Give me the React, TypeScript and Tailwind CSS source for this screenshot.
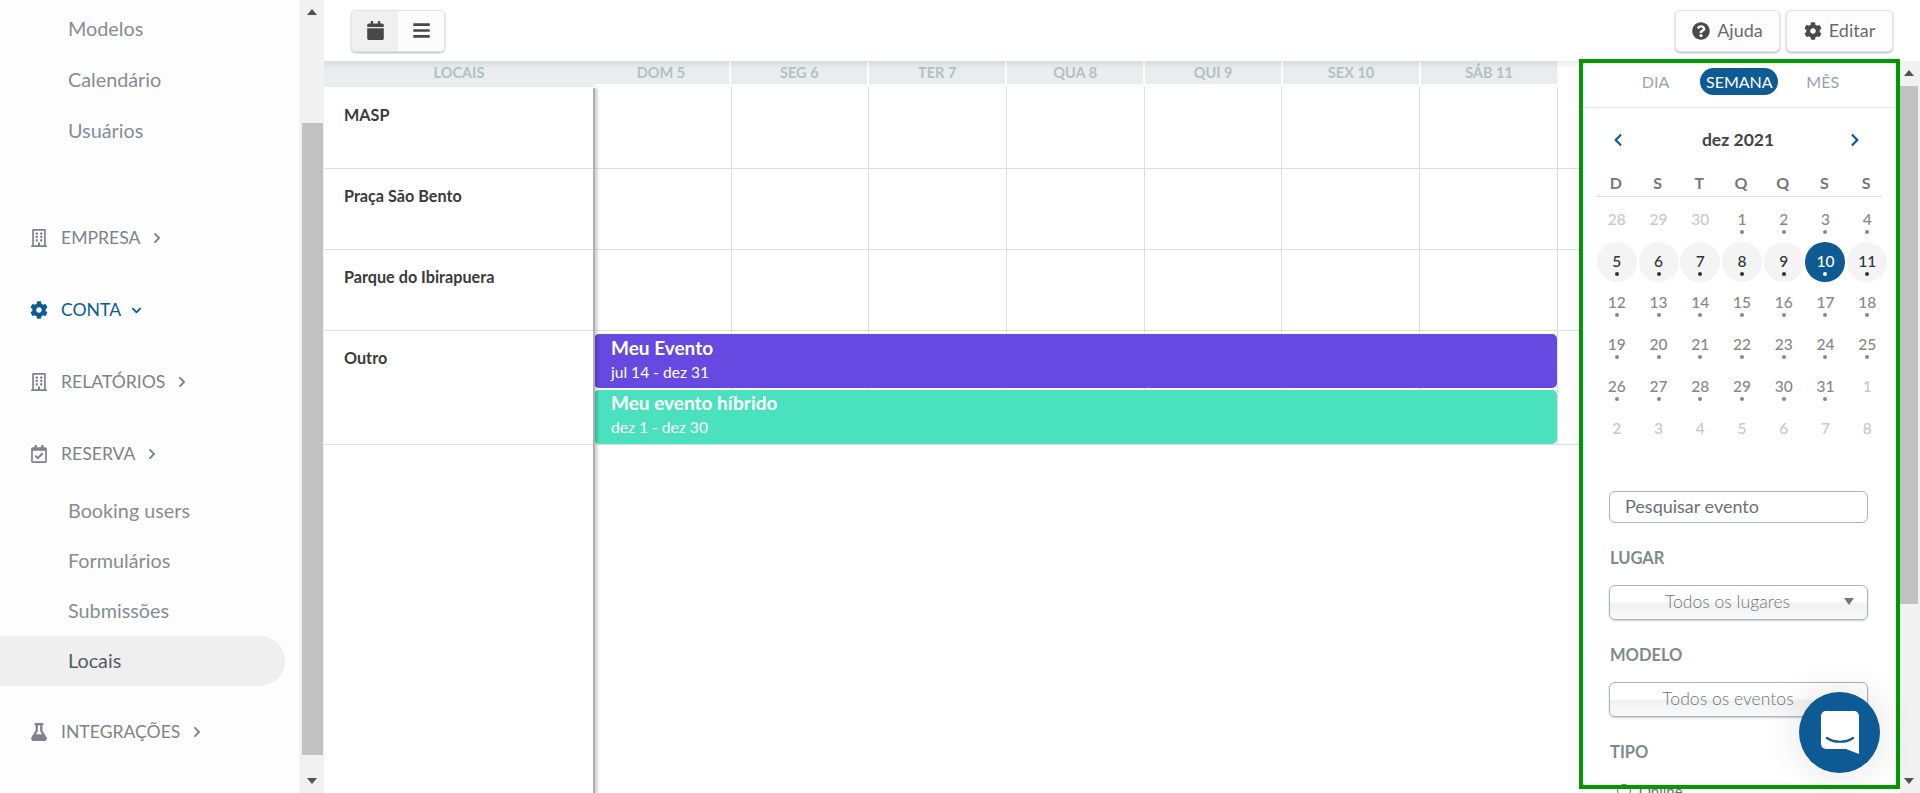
import React from "react";
import { FaRegBuilding, FaCog, FaRegCalendarCheck, FaFlask, FaCalendar, FaBars, FaQuestionCircle, FaChevronLeft, FaChevronRight, FaChevronDown } from "react-icons/fa";

const font = { fontFamily: "Lato, 'Noto Sans', sans-serif" };

function SubItem({ label, active }: { label: string; active?: boolean }) {
  return (
    <div className={"h-[50px] flex items-center pl-[68px] text-[19.8px] w-[285px] rounded-r-[25px] " + (active ? "bg-[#efefef] text-[#555a61]" : "text-[#858d94]")}>
      {label}
    </div>
  );
}

function Heading({ label, icon, active, className }: { label: string; icon: React.ReactNode; active?: boolean; className?: string }) {
  const color = active ? "text-[#0d5a94]" : "text-[#7d8389]";
  return (
    <div className={"h-[60px] flex items-center pl-[30px] text-[17.6px] " + color + " " + (className ?? "")}>
      <span className="w-[18px] flex justify-center text-[18px]">{icon}</span>
      <span className="ml-[13px]">{label}</span>
      {active ? <FaChevronDown className="ml-[10px] text-[11px]" /> : <FaChevronRight className="ml-[11px] text-[12px]" />}
    </div>
  );
}

function Scrollbar({ className, thumbClass }: { className?: string; thumbClass: string }) {
  return (
    <div className={"flex flex-col items-center bg-[#f1f1f1] " + (className ?? "")}>
      <div className="h-[24px] w-full flex items-center justify-center shrink-0">
        <div className="w-0 h-0 border-x-[5px] border-x-transparent border-b-[6px] border-b-[#505050]" />
      </div>
      <div className={"bg-[#c1c1c1] " + thumbClass} />
      <div className="flex-1" />
      <div className="h-[24px] w-full flex items-center justify-center shrink-0">
        <div className="w-0 h-0 border-x-[5px] border-x-transparent border-t-[6px] border-t-[#505050]" />
      </div>
    </div>
  );
}

function Sidebar() {
  return (
    <div className="w-[324px] h-full flex shrink-0 bg-[#fdfdfd] overflow-hidden">
      <div className="w-[299px] pt-[3px]">
        <div className="h-[51px] flex items-center pl-[68px] text-[19.8px] text-[#858d94]">Modelos</div>
        <div className="h-[51px] flex items-center pl-[68px] text-[19.8px] text-[#858d94]">Calendário</div>
        <div className="h-[51px] flex items-center pl-[68px] text-[19.8px] text-[#858d94]">Usuários</div>
        <Heading className="mt-[52px]" label="EMPRESA" icon={<FaRegBuilding />} />
        <Heading className="mt-[12px]" label="CONTA" active icon={<FaCog />} />
        <Heading className="mt-[12px]" label="RELATÓRIOS" icon={<FaRegBuilding />} />
        <Heading className="mt-[12px]" label="RESERVA" icon={<FaRegCalendarCheck />} />
        <div className="mt-[2px]">
          <SubItem label="Booking users" />
          <SubItem label="Formulários" />
          <SubItem label="Submissões" />
          <SubItem label="Locais" active />
        </div>
        <Heading className="mt-[16px]" label="INTEGRAÇÕES" icon={<FaFlask />} />
      </div>
      <Scrollbar className="w-[25px] h-full px-[2px] pr-[2px] border-l border-l-[#f4f4f4]" thumbClass="w-[21px] h-[632px] mt-[99px]" />
    </div>
  );
}

function ToolButton({ icon, label, className }: { icon: React.ReactNode; label: string; className: string }) {
  return (
    <div className={"h-[42px] flex items-center justify-center gap-[7px] rounded-[5px] border border-[#e3e3e3] bg-[#fdfdfd] shadow-[0_1px_2px_rgba(0,0,0,0.3)] text-[18px] text-[#6a6a6a] " + className}>
      <span className="text-[#4a4a4a] text-[18px]">{icon}</span>
      {label}
    </div>
  );
}

function Toolbar() {
  return (
    <div className="h-[61px] shrink-0 flex items-center pl-[27px] pr-[27px] justify-between bg-white">
      <div className="h-[42px] w-[94px] flex rounded-[5px] border border-[#e3e3e3] shadow-[0_1px_2px_rgba(0,0,0,0.3)] overflow-hidden text-[#484848]">
        <div className="w-[47px] flex items-center justify-center bg-[#f0f0f0]"><FaCalendar className="text-[19px]" /></div>
        <div className="w-[47px] flex items-center justify-center bg-[#fcfcfc]"><FaBars className="text-[19px]" /></div>
      </div>
      <div className="flex gap-[6px]">
        <ToolButton className="w-[105px]" icon={<FaQuestionCircle />} label="Ajuda" />
        <ToolButton className="w-[107px]" icon={<FaCog />} label="Editar" />
      </div>
    </div>
  );
}

const days = ["DOM 5", "SEG 6", "TER 7", "QUA 8", "QUI 9", "SEX 10", "SÁB 11"];

function GridRow({ label, height, labelClass, children }: { label: string; height: string; labelClass: string; children?: React.ReactNode }) {
  return (
    <div className={"flex border-b border-b-[#dfdfdf] " + height}>
      <div className={"w-[270px] shrink-0 pl-[20px] text-[16.2px] font-bold text-[#3a3a3a] " + labelClass}>{label}</div>
      <div className="relative flex w-[965px]">
        {days.map((d) => (
          <div key={d} className="w-[137.7px] shrink-0 border-r border-r-[#dedede]" />
        ))}
        {children}
      </div>
    </div>
  );
}

function EventBar({ title, sub, color, className }: { title: string; sub: string; color: string; className: string }) {
  return (
    <div className={"absolute left-0 w-[963px] h-[54px] rounded-[5px] pl-[17px] text-white " + color + " " + className}>
      <div className="text-[19px] font-bold leading-[26px]">{title}</div>
      <div className="text-[15.6px] leading-[23px]">{sub}</div>
    </div>
  );
}

function CalendarArea() {
  return (
    <div className="flex-1 relative overflow-hidden bg-white">
      <div className="flex h-[26px] w-[1235px] text-[14.5px] font-bold text-[#b3c0c4]">
        <div className="w-[270px] h-[26px] bg-[#e9eded] flex items-center justify-center pb-[2px]">LOCAIS</div>
        {days.map((d, i) => (
          <div key={d} className={"h-[23px] bg-[#e9eded] flex items-center justify-center border-r-2 border-r-white " + (i === 0 ? "w-[137.5px] pr-[1.5px]" : "w-[138px]")}>{d}</div>
        ))}
      </div>
      <div className="relative">
        <GridRow label="MASP" height="h-[82px]" labelClass="pt-[16px]" />
        <GridRow label="Praça São Bento" height="h-[81px]" labelClass="pt-[15px]" />
        <GridRow label="Parque do Ibirapuera" height="h-[81px]" labelClass="pt-[15px]" />
        <GridRow label="Outro" height="h-[114px]" labelClass="pt-[15px]">
          <EventBar className="top-[3px] pt-[1px]" color="bg-[#6549e0]" title="Meu Evento" sub="jul 14 - dez 31" />
          <EventBar className="top-[59px]" color="bg-[#4ae1be]" title="Meu evento híbrido" sub="dez 1 - dez 30" />
        </GridRow>
        <div className="absolute top-[1px] left-[269px] w-[2px] h-[706px] bg-[#b0b0b0] shadow-[2px_0_3px_rgba(0,0,0,0.3)]" />
      </div>
      <div className="absolute inset-x-0 top-0 h-[8px] bg-[linear-gradient(to_bottom,rgba(0,0,0,0.07),rgba(0,0,0,0))]" />
    </div>
  );
}

const weeks = [
  [28, 29, 30, 1, 2, 3, 4],
  [5, 6, 7, 8, 9, 10, 11],
  [12, 13, 14, 15, 16, 17, 18],
  [19, 20, 21, 22, 23, 24, 25],
  [26, 27, 28, 29, 30, 31, 1],
  [2, 3, 4, 5, 6, 7, 8],
];

function DayCell({ n, r, c }: { n: number; r: number; c: number }) {
  const muted = (r === 0 && c < 3) || r === 5 || (r === 4 && c === 6);
  const inWeek = r === 1;
  const selected = inWeek && c === 5;
  let text = "text-[#8c8686]";
  if (muted) text = "text-[#c8c8c8]";
  if (inWeek) text = "text-[#333333]";
  if (selected) text = "text-white font-bold";
  let bg = "";
  if (inWeek) bg = "bg-[#f4f4f4]";
  if (selected) bg = "bg-[#0d5a94]";
  const dot = selected ? "bg-white" : inWeek ? "bg-[#333333]" : "bg-[#8c8686]";
  return (
    <div className="h-[41.8px] flex justify-center items-center">
      <div className={"w-[40px] h-[40px] rounded-full flex flex-col items-center pt-[9px] text-[15.5px] font-medium leading-[20px] " + bg + " " + text}>
        {n}
        {!muted && <div className={"w-[4px] h-[4px] rounded-full mt-[1px] " + dot} />}
      </div>
    </div>
  );
}

function SelectBox({ label, arrow }: { label: string; arrow?: boolean }) {
  return (
    <div className="relative h-[35px] rounded-[6px] border border-[#aab4ba] bg-[linear-gradient(to_bottom,#ffffff_0%,#ffffff_45%,#f1f1f1_55%,#fafafa_100%)] shadow-[0_1px_2px_rgba(0,0,0,0.2)] flex items-center justify-center text-[17.6px] font-light text-[#6f7479]">
      <span className={arrow ? "mr-[22px]" : "mr-[21px]"}>{label}</span>
      {arrow && <div className="absolute right-[13px] top-[12px] w-0 h-0 border-x-[5px] border-x-transparent border-t-[7px] border-t-[#777777]" />}
    </div>
  );
}

function RightPanel() {
  return (
    <div className="w-[321px] shrink-0 bg-white overflow-hidden relative">
      <div className="absolute inset-x-0 top-0 h-[5px] bg-[linear-gradient(to_bottom,#ececec,#ffffff)]" />
      <div className="ml-[4px] w-[313px] h-[47px] flex justify-center border-b border-b-[#e6e6e6] text-[16px] text-[#9aa3aa] relative">
        <div className="flex items-center pt-[1px] h-[40px] pl-[2px]">
          <span>DIA</span>
          <span className="ml-[31px] w-[78px] h-[27px] rounded-full bg-[#0d5a94] text-white flex items-center justify-center">SEMANA</span>
          <span className="ml-[28px]">MÊS</span>
        </div>
      </div>
      <div className="flex items-center justify-between ml-[32px] w-[251px] h-[28px] mt-[18px] text-[#0d5a94]">
        <FaChevronLeft className="text-[14px]" />
        <span className="text-[17.5px] font-bold text-[#444444] pl-[3px]">dez 2021</span>
        <FaChevronRight className="text-[14px]" />
      </div>
      <div className="ml-[17px] w-[286px] mt-[19px] border-b border-b-[#dddddd] h-[24px]">
        <div className="-ml-[1px] w-[292px] grid grid-cols-7 text-[16px] font-bold text-[#777777] leading-[20px]">
          {["D", "S", "T", "Q", "Q", "S", "S"].map((d, i) => (
            <div key={i} className="text-center">{d}</div>
          ))}
        </div>
      </div>
      <div className="ml-[17px] w-[292px] mt-[2px] grid grid-cols-7">
        {weeks.map((w, r) => w.map((n, c) => <DayCell key={r + "-" + c} n={n} r={r} c={c} />))}
      </div>
      <div className="ml-[30px] w-[259px] mt-[41px]">
        <div className="h-[32px] rounded-[6px] border border-[#aab4ba] flex items-center pl-[15px] text-[18px] text-[#6c7076]">Pesquisar evento</div>
        <div className="mt-[25px] h-[20px] pl-[1px] text-[16.5px] font-bold text-[#7f8a8e] leading-[20px]">LUGAR</div>
        <div className="mt-[17px]"><SelectBox label="Todos os lugares" arrow /></div>
        <div className="mt-[25px] h-[20px] pl-[1px] text-[16.5px] font-bold text-[#7f8a8e] leading-[20px]">MODELO</div>
        <div className="mt-[17px]"><SelectBox label="Todos os eventos" /></div>
        <div className="mt-[25px] h-[20px] pl-[1px] text-[16.5px] font-bold text-[#7f8a8e] leading-[20px]">TIPO</div>
        <div className="mt-[18px] ml-[8px] flex items-center gap-[8px] text-[15px] text-[#6c7076]">
          <span className="w-[14px] h-[14px] rounded-full border border-[#666666]" />
          Online
        </div>
      </div>
    </div>
  );
}

function ChatBubble() {
  return (
    <div className="absolute left-[1799px] top-[692px] w-[81px] h-[81px] rounded-full bg-[#0d5a94] flex items-center justify-center shadow-[0_0_40px_rgba(0,0,0,0.12)]">
      <svg width="38" height="44" viewBox="0 0 38 44">
        <path d="M5 0H33A5 5 0 0 1 38 5V43L25 38H5A5 5 0 0 1 0 33V5A5 5 0 0 1 5 0Z" fill="#ffffff" />
        <path d="M6 27C13 32 25 32 32 27" fill="none" stroke="#0d5a94" strokeWidth="2.2" strokeLinecap="round" />
      </svg>
    </div>
  );
}

export default function App() {
  return (
    <div className="relative w-[1920px] h-[793px] flex overflow-hidden bg-white" style={font}>
      <Sidebar />
      <div className="flex-1 flex flex-col min-w-0 h-full">
        <Toolbar />
        <div className="flex flex-1 min-h-0">
          <CalendarArea />
          <RightPanel />
          <Scrollbar className="w-[20px] h-full pr-[2px] self-stretch" thumbClass="w-[18px] h-[518px] mt-[1px]" />
        </div>
      </div>
      <div className="absolute left-[1579px] top-[59px] w-[321px] h-[730px] border-4 border-[#009900] pointer-events-none" />
      <ChatBubble />
    </div>
  );
}
